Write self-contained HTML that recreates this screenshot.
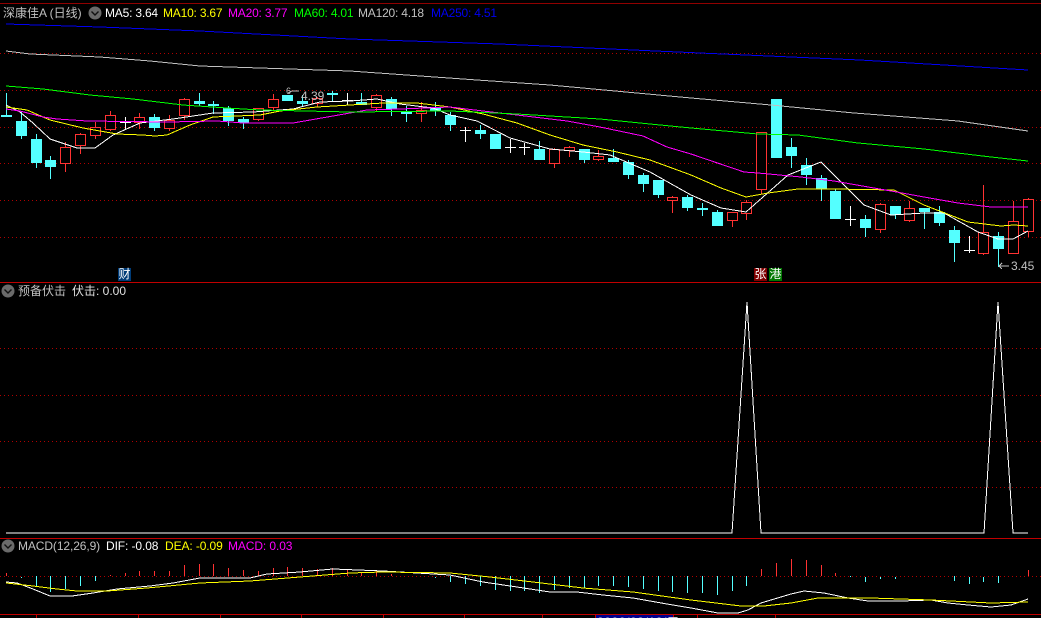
<!DOCTYPE html>
<html><head><meta charset="utf-8">
<style>
html,body{margin:0;padding:0;background:#000;width:1041px;height:618px;overflow:hidden}
#w{position:relative;width:1041px;height:618px;overflow:hidden;background:#000;font:12px/14px "Liberation Sans","WenQuanYi Zen Hei","Noto Sans CJK SC",sans-serif}
svg{position:absolute;left:0;top:0}
.t{position:absolute;white-space:nowrap;height:14px}
.g{color:#c0c0c0}.wh{color:#fff}.y{color:#ff0}.m{color:#f0f}.l{color:#0f0}.b{color:#0000f0}
.tag{position:absolute;width:13px;height:13px;line-height:13px;text-align:center;color:#fff;font-size:12px}
</style></head><body><div id="w">
<svg id="s" width="1041" height="618" viewBox="0 0 1041 618" shape-rendering="crispEdges">
<defs><pattern id="dot" x="0" y="0" width="4" height="1" patternUnits="userSpaceOnUse"><rect x="0" y="0" width="1" height="1" fill="#b00000"/></pattern></defs>
<g id="grid">
<rect x="0" y="3" width="1041" height="1" fill="#900000"/>
<rect x="0" y="282" width="1041" height="1" fill="#c00000"/>
<rect x="0" y="538" width="1041" height="1" fill="#c00000"/>
<rect x="0" y="614" width="1041" height="1" fill="#c00000"/>
<g fill="url(#dot)">
<rect x="0" y="53" width="1041" height="1"/>
<rect x="0" y="90" width="1041" height="1"/>
<rect x="0" y="127" width="1041" height="1"/>
<rect x="0" y="163" width="1041" height="1"/>
<rect x="0" y="200" width="1041" height="1"/>
<rect x="0" y="237" width="1041" height="1"/>
<rect x="0" y="348" width="1041" height="1"/>
<rect x="0" y="395" width="1041" height="1"/>
<rect x="0" y="441" width="1041" height="1"/>
<rect x="0" y="487" width="1041" height="1"/>
<rect x="0" y="576" width="1041" height="1"/>
</g>
<g fill="#c00000">
<rect x="36" y="615" width="1" height="3"/><rect x="138" y="615" width="1" height="3"/><rect x="220" y="615" width="1" height="3"/><rect x="301" y="615" width="1" height="3"/><rect x="383" y="615" width="1" height="3"/><rect x="464" y="615" width="1" height="3"/><rect x="542" y="615" width="1" height="3"/><rect x="595" y="615" width="1" height="3"/><rect x="673" y="615" width="1" height="3"/><rect x="697" y="615" width="1" height="3"/><rect x="775" y="615" width="1" height="3"/>
</g>
</g>
<rect x="596" y="615" width="77" height="3" fill="#00008c"/>
<g id="c"></g>
<g fill="none" stroke-width="1">
<polyline stroke="#fff" points="6,105 20,112 33,123 50,139 77,148 95,148 113,135 140,123 173,119 213,113 253,112 293,109 320,102 350,101 377,99 400,104 433,108 450,115 477,121 510,138 550,149 583,152 610,155 650,172 691,195 721,208 746,212 788,175 821,162 864,205 891,215 924,213 944,213 978,232 998,239 1013,239 1028,231"/>
<polyline stroke="#ff0" points="6,107 27,110 50,120 83,128 117,134 143,135 155,136 167,135 190,125 213,117 260,115 280,111 317,107 350,105 383,103 417,103 450,107 483,114 517,123 550,135 583,145 617,152 650,160 691,175 721,188 746,197 768,193 798,189 834,189 894,190 924,205 968,222 1001,226 1014,225 1028,226"/>
<polyline stroke="#f0f" points="6,109 20,111 43,117 57,119 87,121 167,122 217,121 243,123 293,123 333,116 350,113 367,110 400,109 450,107 483,111 517,115 567,121 600,127 643,136 667,147 691,154 744,172 758,173 801,177 834,181 891,191 924,197 958,203 991,207 1028,207"/>
<polyline stroke="#0f0" points="6,86 43,89 90,95 133,99 183,105 227,108 260,110 350,112 450,111 517,114 600,119 650,124 691,128 758,134 798,135 858,143 924,149 991,157 1028,161"/>
<polyline stroke="#c0c0c0" points="6,51 30,54 100,57 150,61 200,66 350,71 477,80 550,85 691,98 771,105 854,113 958,121 1028,131"/>
<polyline stroke="#0000f0" points="6,24 100,27 200,31 350,39 500,44 700,53 860,60 1028,70"/>
<polyline stroke="#fff" points="6,533 732,533 747,302 761,533 984,533 998,302 1013,533 1028,533"/>
<polyline stroke="#fff" points="6,582 17,583 33,589 50,596 72,596 93,593 117,589 150,586 173,583 200,578 250,578 267,574 300,572 333,569 383,571 417,573 450,575 483,582 517,587 550,592 577,592 603,595 633,598 667,604 691,608 718,613 738,613 748,610 761,603 791,594 804,591 824,593 848,598 868,601 901,601 931,600 948,603 968,605 991,607 1011,605 1028,599"/>
<polyline stroke="#ff0" points="6,583 33,586 57,589 77,591 107,591 147,588 200,583 250,581 300,577 350,573 383,572 450,573 490,577 533,582 583,588 633,592 691,600 741,606 764,606 791,603 818,598 871,598 931,600 991,603 1028,602"/>
<path d="M288 93L292 91H299" stroke="#c0c0c0"/>
<path d="M999 266H1009M999 266L1002 263M999 266L1002 269" stroke="#c0c0c0"/>
</g>
<circle cx="95" cy="13" r="6.5" fill="#6a6a6a" shape-rendering="auto"/>
<path d="M91.5 11.5L95 15L98.5 11.5" fill="none" stroke="#111" stroke-width="1.4" shape-rendering="auto"/>
<circle cx="8" cy="291" r="6.5" fill="#6a6a6a" shape-rendering="auto"/>
<path d="M4.5 289.5L8 293L11.5 289.5" fill="none" stroke="#111" stroke-width="1.4" shape-rendering="auto"/>
<circle cx="8" cy="546" r="6.5" fill="#6a6a6a" shape-rendering="auto"/>
<path d="M4.5 544.5L8 548L11.5 544.5" fill="none" stroke="#111" stroke-width="1.4" shape-rendering="auto"/>
</svg>

<div class="t g" style="left:3px;top:6px">深康佳A (日线)</div>
<div class="t wh" style="left:105px;top:6px;letter-spacing:-.2px">MA5: 3.64</div>
<div class="t y" style="left:163px;top:6px;letter-spacing:-.2px">MA10: 3.67</div>
<div class="t m" style="left:228px;top:6px;letter-spacing:-.2px">MA20: 3.77</div>
<div class="t l" style="left:294px;top:6px;letter-spacing:-.2px">MA60: 4.01</div>
<div class="t g" style="left:358px;top:6px;letter-spacing:-.2px">MA120: 4.18</div>
<div class="t b" style="left:431px;top:6px;letter-spacing:-.2px">MA250: 4.51</div>

<div class="t g" style="left:301px;top:89px">4.39</div>
<div class="t g" style="left:1011px;top:259px">3.45</div>
<div class="t g" style="left:286px;top:84px;font-size:9px">6</div>

<div class="tag" style="left:118px;top:268px;background:#003c78">财</div>
<div class="tag" style="left:754px;top:268px;background:#800000">张</div>
<div class="tag" style="left:769px;top:268px;background:#007800">港</div>

<div class="t g" style="left:18px;top:284px">预备伏击</div>
<div class="t" style="left:72px;top:284px;color:#e0e0e0">伏击: 0.00</div>

<div class="t g" style="left:18px;top:539px;letter-spacing:-.1px">MACD(12,26,9)</div>
<div class="t wh" style="left:106px;top:539px;letter-spacing:-.1px">DIF: -0.08</div>
<div class="t y" style="left:165px;top:539px;letter-spacing:-.1px">DEA: -0.09</div>
<div class="t m" style="left:228px;top:539px;letter-spacing:-.1px">MACD: 0.03</div>

<div class="t" style="left:597px;top:615px;color:#d8d8e8;letter-spacing:.6px">2020/03/18/三</div>
</div>
<script>
var C=[[6,'c',93,115,117,117],[21,'c',112,121,136,138],[36,'c',134,139,163,167],[50,'c',156,160,167,178],[65,'r',142,147,163,171],[80,'r',133,134,145,153],[95,'r',122,127,135,138],[110,'r',111,115,129,130],[125,'w',117,122,122,128],[139,'r',113,117,122,128],[154,'c',114,117,128,130],[169,'r',115,120,128,130],[184,'r',98,99,115,119],[199,'c',93,101,104,105],[213,'c',101,104,106,113],[228,'c',106,108,121,125],[243,'c',117,119,123,128],[258,'r',108,108,119,120],[273,'r',94,99,107,110],[287,'c',95,95,101,101],[302,'c',95,101,104,106],[317,'r',97,98,103,106],[332,'c',91,93,95,101],[347,'w',93,100,100,104],[361,'c',93,102,105,105],[376,'r',94,95,107,111],[391,'c',97,99,109,115],[406,'c',106,111,114,121],[421,'r',102,110,113,121],[435,'c',102,108,111,115],[450,'c',112,115,125,130],[465,'w',127,130,130,141],[480,'c',125,130,134,138],[495,'c',134,134,149,149],[510,'w',139,147,147,152],[524,'w',143,147,147,154],[539,'c',141,149,160,160],[554,'r',148,149,163,167],[569,'r',146,147,150,156],[584,'c',149,149,160,162],[598,'r',150,156,159,160],[613,'c',149,158,162,162],[628,'c',160,162,175,178],[643,'c',173,175,184,191],[658,'c',180,180,195,197],[672,'r',196,197,200,212],[687,'c',195,197,208,210],[702,'c',203,208,210,215],[717,'c',210,212,226,226],[732,'r',212,212,220,226],[746,'r',200,202,213,219],[761,'r',132,132,189,193],[776,'c',99,99,158,158],[791,'c',138,147,156,167],[806,'c',158,165,175,184],[821,'c',175,178,189,200],[835,'c',189,191,219,219],[850,'w',206,219,219,225],[865,'c',215,219,228,236],[880,'r',203,204,229,232],[895,'c',206,206,215,218],[909,'r',201,208,220,221],[924,'c',208,208,212,228],[939,'c',206,212,223,225],[954,'c',226,230,243,261],[969,'w',236,250,250,252],[983,'r',185,232,253,254],[998,'c',232,236,249,266],[1013,'r',201,221,253,253],[1028,'r',198,199,231,236]];
var M=[[6,573,576,'r'],[21,577,578,'c'],[36,576,586,'c'],[50,576,592,'c'],[65,576,589,'c'],[80,576,586,'c'],[95,576,581,'c'],[110,575,576,'r'],[125,573,576,'r'],[139,571,576,'r'],[154,571,576,'r'],[169,571,576,'r'],[184,565,576,'r'],[199,564,576,'r'],[213,564,576,'r'],[228,568,576,'r'],[243,570,576,'r'],[258,571,576,'r'],[273,568,576,'r'],[287,567,576,'r'],[302,568,576,'r'],[317,569,576,'r'],[332,568,576,'r'],[347,569,576,'r'],[361,572,576,'r'],[376,571,576,'r'],[391,574,576,'r'],[435,577,578,'c'],[450,576,582,'c'],[465,576,584,'c'],[480,576,586,'c'],[495,576,590,'c'],[510,576,591,'c'],[524,576,591,'c'],[539,576,593,'c'],[554,576,590,'c'],[569,576,588,'c'],[584,576,588,'c'],[598,576,586,'c'],[613,576,586,'c'],[628,576,587,'c'],[643,576,589,'c'],[658,576,591,'c'],[672,576,592,'c'],[687,576,593,'c'],[702,576,593,'c'],[717,576,595,'c'],[732,576,591,'c'],[746,576,586,'c'],[761,569,576,'r'],[776,563,576,'r'],[791,559,576,'r'],[806,560,576,'r'],[821,565,576,'r'],[835,573,576,'r'],[850,576,577,'c'],[865,577,582,'c'],[880,577,579,'c'],[895,577,579,'c'],[954,576,581,'c'],[969,577,584,'c'],[983,577,582,'c'],[998,576,583,'c'],[1028,570,576,'r']];
var R='#ff3232',Y='#54ffff',W='#ffffff',h='';
function r(x,y,w,ht,f){return '<rect x="'+x+'" y="'+y+'" width="'+w+'" height="'+ht+'" fill="'+f+'"/>';}
C.forEach(function(a){var x=a[0],t=a[1],hi=a[2],tp=a[3],bt=a[4],lo=a[5];
 var col=t=='r'?R:t=='c'?Y:W;
 if(tp>hi)h+=r(x,hi,1,tp-hi,col);
 if(lo>bt)h+=r(x,bt,1,lo-bt+1,col);
 if(t=='w'){h+=r(x-5,tp,11,1,col);}
 else if(t=='c'){h+=r(x-5,tp,11,Math.max(bt-tp,2),col);}
 else{var H=bt-tp+1;h+=r(x-5,tp,11,H,'#000')+r(x-5,tp,11,1,R)+r(x-5,bt,11,1,R)+r(x-5,tp,1,H,R)+r(x+5,tp,1,H,R);}
});
M.forEach(function(a){h+=r(a[0],a[1],1,a[2]-a[1],a[3]=='r'?R:Y);});
document.getElementById('c').innerHTML=h;
</script>
</body></html>
